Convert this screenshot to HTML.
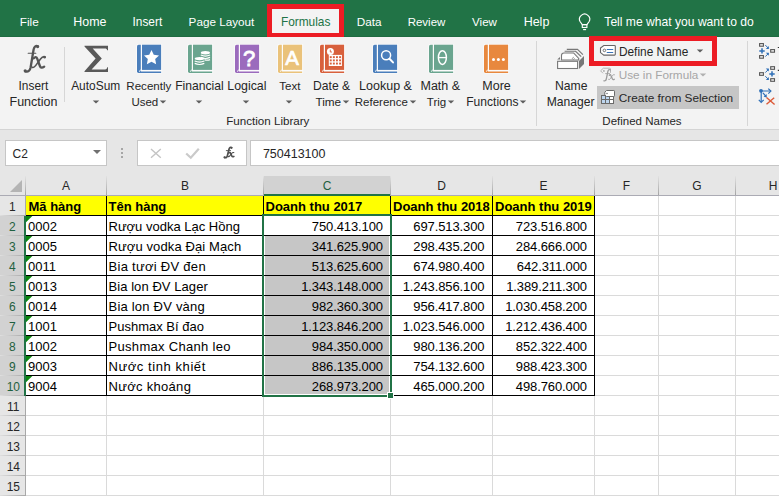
<!DOCTYPE html>
<html><head><meta charset="utf-8"><style>
html,body{margin:0;padding:0;width:779px;height:496px;overflow:hidden;background:#e6e6e6;}
.r{position:absolute;box-sizing:content-box;}
.t{position:absolute;white-space:pre;font-family:"Liberation Sans", sans-serif;}
</style></head><body>
<div class="r" style="left:0px;top:0px;width:779px;height:37px;background:#217346;"></div>
<div class="r" style="left:0px;top:36px;width:779px;height:1px;background:#1e6b41;"></div>
<div class="t" style="left:-170.75px;width:400px;text-align:center;top:17px;font-size:11.8px;line-height:11.8px;color:#ffffff;font-weight:400;">File</div>
<div class="t" style="left:-110.15px;width:400px;text-align:center;top:16px;font-size:12.43px;line-height:12.43px;color:#ffffff;font-weight:400;">Home</div>
<div class="t" style="left:-52.64999999999998px;width:400px;text-align:center;top:17px;font-size:11.88px;line-height:11.88px;color:#ffffff;font-weight:400;">Insert</div>
<div class="t" style="left:21.44999999999999px;width:400px;text-align:center;top:16px;font-size:11.69px;line-height:11.69px;color:#ffffff;font-weight:400;">Page Layout</div>
<div class="t" style="left:169.25px;width:400px;text-align:center;top:16px;font-size:11.75px;line-height:11.75px;color:#ffffff;font-weight:400;">Data</div>
<div class="t" style="left:226.5px;width:400px;text-align:center;top:17px;font-size:11.5px;line-height:11.5px;color:#ffffff;font-weight:400;">Review</div>
<div class="t" style="left:284.5px;width:400px;text-align:center;top:17px;font-size:11.58px;line-height:11.58px;color:#ffffff;font-weight:400;">View</div>
<div class="t" style="left:336.5px;width:400px;text-align:center;top:16px;font-size:12.5px;line-height:12.5px;color:#ffffff;font-weight:400;">Help</div>
<div class="r" style="left:267px;top:4px;width:77px;height:33px;background:#f3f3f3;"></div>
<div class="t" style="left:105.64999999999998px;width:400px;text-align:center;top:17px;font-size:11.88px;line-height:11.88px;color:#217346;font-weight:400;">Formulas</div>
<div class="r" style="left:267px;top:4px;width:67px;height:24px;border:5px solid #ec1c24;"></div>
<svg class="r" style="left:572px;top:8px" width="28" height="26" viewBox="572 8 28 26">
<g fill="none" stroke="#fff" stroke-width="1.15">
<path d="M582.3 24.6 L580.2 21.8 A5.1 5.1 0 1 1 589 21.8 L586.9 24.6 Z"/>
<rect x="582.3" y="24.6" width="4.6" height="2.9"/>
<path d="M583.1 29.6 H586.1"/>
</g>
</svg>
<div class="t" style="left:479.04999999999995px;width:400px;text-align:center;top:16px;font-size:12.12px;line-height:12.12px;color:#ffffff;font-weight:400;">Tell me what you want to do</div>
<div class="r" style="left:0px;top:37px;width:779px;height:92px;background:#f3f3f3;"></div>
<div class="r" style="left:0px;top:129px;width:779px;height:1px;background:#d4d4d4;"></div>
<div class="r" style="left:0px;top:130px;width:779px;height:366px;background:#e6e6e6;"></div>
<div class="r" style="left:64px;top:47px;width:1px;height:55px;background:#d6d6d6;"></div>
<div class="r" style="left:536px;top:41px;width:1px;height:85px;background:#d6d6d6;"></div>
<div class="r" style="left:747px;top:41px;width:1px;height:85px;background:#d6d6d6;"></div>
<svg class="r" style="left:18px;top:40px" width="34" height="36" viewBox="0 0 34 36">
<g fill="none" stroke="#555" stroke-linecap="round">
<path d="M19.8 6.3 C18 5.3 16.3 6.3 15.6 9.5 L12.6 27.5 C12 30.6 10.2 32.3 7.3 31.3" stroke-width="2.3"/>
<path d="M10.2 13.3 H17.8" stroke-width="1.1"/>
<path d="M15.8 18.3 C17.2 16.6 18.6 16.8 19.3 18.8 L21.9 26 C22.6 28 24.2 28.2 26.2 26.6" stroke-width="2.3"/>
<path d="M27 16.8 C25.5 16.2 24 17 22.5 19 L17.8 25.4 C16.6 27.1 15.4 28 14.2 27.3" stroke-width="1.6"/>
</g>
<circle cx="19.6" cy="6.6" r="1.6" fill="#555"/><circle cx="7.2" cy="30.8" r="1.6" fill="#555"/><circle cx="26.6" cy="17.2" r="1.3" fill="#555"/>
</svg>
<div class="t" style="left:-166.6px;width:400px;text-align:center;top:81px;font-size:11.88px;line-height:11.88px;color:#262626;font-weight:400;">Insert</div>
<div class="t" style="left:-166.5px;width:400px;text-align:center;top:96px;font-size:12.5px;line-height:12.5px;color:#262626;font-weight:400;">Function</div>
<svg class="r" style="left:80px;top:40px" width="34" height="36" viewBox="0 0 34 36"><path d="M4.5 5.8 H28 V10.3 H27.2 C27 8.9 26.3 8.4 24.8 8.4 H12.7 L21.8 18.5 L11.6 29.4 H25 C26.5 29.4 27 28.8 27.2 27.3 H28 V32 H4.5 V31.2 L15.6 18.6 L4.5 6.6 Z" fill="#595959"/></svg>
<div class="t" style="left:-104.3px;width:400px;text-align:center;top:81px;font-size:11.93px;line-height:11.93px;color:#262626;font-weight:400;">AutoSum</div>
<svg class="r" style="left:92.3px;top:98.5px" width="8" height="6" viewBox="0 0 8 6"><path d="M0.8 1.4 H7.2 L4 4.6 Z" fill="#5e5e5e"/></svg>
<svg class="r" style="left:136px;top:44px" width="27" height="30" viewBox="0 0 27 30">
<path d="M0.3 2 Q0.3 0 2.3 0 H26.1 V29.6 H2.3 Q0.3 29.6 0.3 27.6 Z" fill="#fbfbfb"/>
<path d="M1 2.3 Q1 0.7 2.6 0.7 H4.8 V28.9 H2.6 Q1 28.9 1 27.3 Z" fill="#4a7ebb"/>
<rect x="6" y="0.7" width="19.1" height="25.2" fill="#4a7ebb"/>
<path d="M3.2 27.4 H25.1 V28.9 H2.6 Z" fill="#4a7ebb"/>
<path d="M4.8 25.9 L3 27.6" stroke="#fff" stroke-width="1"/>
<path d="M15.50 6.00 L17.78 10.77 L23.01 11.46 L19.18 15.10 L20.14 20.29 L15.50 17.77 L10.86 20.29 L11.82 15.10 L7.99 11.46 L13.22 10.77 Z" fill="#fff"/>
</svg>
<div class="t" style="left:-51.19999999999999px;width:400px;text-align:center;top:81px;font-size:11.56px;line-height:11.56px;color:#262626;font-weight:400;">Recently</div>
<div class="t" style="left:-55.19999999999999px;width:400px;text-align:center;top:97px;font-size:11.5px;line-height:11.5px;color:#262626;font-weight:400;">Used</div>
<svg class="r" style="left:159.29999999999998px;top:98.5px" width="8" height="6" viewBox="0 0 8 6"><path d="M0.8 1.4 H7.2 L4 4.6 Z" fill="#5e5e5e"/></svg>
<svg class="r" style="left:187px;top:44px" width="27" height="30" viewBox="0 0 27 30">
<path d="M0.3 2 Q0.3 0 2.3 0 H26.1 V29.6 H2.3 Q0.3 29.6 0.3 27.6 Z" fill="#fbfbfb"/>
<path d="M1 2.3 Q1 0.7 2.6 0.7 H4.8 V28.9 H2.6 Q1 28.9 1 27.3 Z" fill="#6aa58f"/>
<rect x="6" y="0.7" width="19.1" height="25.2" fill="#6aa58f"/>
<path d="M3.2 27.4 H25.1 V28.9 H2.6 Z" fill="#6aa58f"/>
<path d="M4.8 25.9 L3 27.6" stroke="#fff" stroke-width="1"/>
<g fill="none" stroke="#fff" stroke-width="1.2">
<path d="M13.8 11 Q18.4 13.2 23 11 M13.8 13.4 Q18.4 15.6 23 13.4 M17.5 15.6 Q20.2 16.8 23 15.6"/>
<path d="M7.7 17 Q12.5 19.2 17.3 17 M7.7 19.4 Q12.5 21.6 17.3 19.4"/>
</g>
<ellipse cx="18.4" cy="8.7" rx="4.6" ry="1.7" fill="#fff"/>
<ellipse cx="12.5" cy="14.6" rx="4.8" ry="1.7" fill="#fff"/>
</svg>
<div class="t" style="left:-0.5999999999999943px;width:400px;text-align:center;top:80px;font-size:12.13px;line-height:12.13px;color:#262626;font-weight:400;">Financial</div>
<svg class="r" style="left:194.79999999999998px;top:98.5px" width="8" height="6" viewBox="0 0 8 6"><path d="M0.8 1.4 H7.2 L4 4.6 Z" fill="#5e5e5e"/></svg>
<svg class="r" style="left:234px;top:44px" width="27" height="30" viewBox="0 0 27 30">
<path d="M0.3 2 Q0.3 0 2.3 0 H26.1 V29.6 H2.3 Q0.3 29.6 0.3 27.6 Z" fill="#fbfbfb"/>
<path d="M1 2.3 Q1 0.7 2.6 0.7 H4.8 V28.9 H2.6 Q1 28.9 1 27.3 Z" fill="#9b6bbd"/>
<rect x="6" y="0.7" width="19.1" height="25.2" fill="#9b6bbd"/>
<path d="M3.2 27.4 H25.1 V28.9 H2.6 Z" fill="#9b6bbd"/>
<path d="M4.8 25.9 L3 27.6" stroke="#fff" stroke-width="1"/>
<text x="15" y="21.7" text-anchor="middle" font-family="Liberation Sans" font-size="22" fill="#fff" stroke="#fff" stroke-width="0.8">?</text>
</svg>
<div class="t" style="left:46.900000000000006px;width:400px;text-align:center;top:80px;font-size:12.37px;line-height:12.37px;color:#262626;font-weight:400;">Logical</div>
<svg class="r" style="left:242.4px;top:98.5px" width="8" height="6" viewBox="0 0 8 6"><path d="M0.8 1.4 H7.2 L4 4.6 Z" fill="#5e5e5e"/></svg>
<svg class="r" style="left:277px;top:44px" width="27" height="30" viewBox="0 0 27 30">
<path d="M0.3 2 Q0.3 0 2.3 0 H26.1 V29.6 H2.3 Q0.3 29.6 0.3 27.6 Z" fill="#fbfbfb"/>
<path d="M1 2.3 Q1 0.7 2.6 0.7 H4.8 V28.9 H2.6 Q1 28.9 1 27.3 Z" fill="#eac27a"/>
<rect x="6" y="0.7" width="19.1" height="25.2" fill="#eac27a"/>
<path d="M3.2 27.4 H25.1 V28.9 H2.6 Z" fill="#eac27a"/>
<path d="M4.8 25.9 L3 27.6" stroke="#fff" stroke-width="1"/>
<text x="15" y="20.9" text-anchor="middle" font-family="Liberation Sans" font-size="20.5" fill="#fff" stroke="#fff" stroke-width="0.7">A</text>
</svg>
<div class="t" style="left:89.80000000000001px;width:400px;text-align:center;top:81px;font-size:11.5px;line-height:11.5px;color:#262626;font-weight:400;">Text</div>
<svg class="r" style="left:284.6px;top:98.5px" width="8" height="6" viewBox="0 0 8 6"><path d="M0.8 1.4 H7.2 L4 4.6 Z" fill="#5e5e5e"/></svg>
<svg class="r" style="left:319px;top:44px" width="27" height="30" viewBox="0 0 27 30">
<path d="M0.3 2 Q0.3 0 2.3 0 H26.1 V29.6 H2.3 Q0.3 29.6 0.3 27.6 Z" fill="#fbfbfb"/>
<path d="M1 2.3 Q1 0.7 2.6 0.7 H4.8 V28.9 H2.6 Q1 28.9 1 27.3 Z" fill="#d8603c"/>
<rect x="6" y="0.7" width="19.1" height="25.2" fill="#d8603c"/>
<path d="M3.2 27.4 H25.1 V28.9 H2.6 Z" fill="#d8603c"/>
<path d="M4.8 25.9 L3 27.6" stroke="#fff" stroke-width="1"/>
<circle cx="11.4" cy="7.5" r="3.5" fill="#fff"/><path d="M11.3 5.6 V8 H13" stroke="#d8603c" stroke-width="0.9" fill="none"/>
<rect x="9.8" y="10.9" width="13.1" height="11.1" fill="#fff"/>
<g fill="#d8603c"><rect x="10.8" y="12.2" width="1.9" height="1.9"/><rect x="13.9" y="12.2" width="1.9" height="1.9"/><rect x="17.0" y="12.2" width="1.9" height="1.9"/><rect x="20.1" y="12.2" width="1.9" height="1.9"/><rect x="10.8" y="15.4" width="1.9" height="1.9"/><rect x="13.9" y="15.4" width="1.9" height="1.9"/><rect x="17.0" y="15.4" width="1.9" height="1.9"/><rect x="20.1" y="15.4" width="1.9" height="1.9"/><rect x="10.8" y="18.6" width="1.9" height="1.9"/><rect x="13.9" y="18.6" width="1.9" height="1.9"/><rect x="17.0" y="18.6" width="1.9" height="1.9"/><rect x="20.1" y="18.6" width="1.9" height="1.9"/></g>
</svg>
<div class="t" style="left:131.60000000000002px;width:400px;text-align:center;top:80px;font-size:12.13px;line-height:12.13px;color:#262626;font-weight:400;">Date &amp;</div>
<div class="t" style="left:128.3px;width:400px;text-align:center;top:96px;font-size:11.77px;line-height:11.77px;color:#262626;font-weight:400;">Time</div>
<svg class="r" style="left:341.70000000000005px;top:98.5px" width="8" height="6" viewBox="0 0 8 6"><path d="M0.8 1.4 H7.2 L4 4.6 Z" fill="#5e5e5e"/></svg>
<svg class="r" style="left:372px;top:44px" width="27" height="30" viewBox="0 0 27 30">
<path d="M0.3 2 Q0.3 0 2.3 0 H26.1 V29.6 H2.3 Q0.3 29.6 0.3 27.6 Z" fill="#fbfbfb"/>
<path d="M1 2.3 Q1 0.7 2.6 0.7 H4.8 V28.9 H2.6 Q1 28.9 1 27.3 Z" fill="#4a7ebb"/>
<rect x="6" y="0.7" width="19.1" height="25.2" fill="#4a7ebb"/>
<path d="M3.2 27.4 H25.1 V28.9 H2.6 Z" fill="#4a7ebb"/>
<path d="M4.8 25.9 L3 27.6" stroke="#fff" stroke-width="1"/>
<circle cx="14.1" cy="11.3" r="4.5" fill="none" stroke="#fff" stroke-width="1.5"/><path d="M17.5 14.7 L21 18.4" stroke="#fff" stroke-width="2" stroke-linecap="round"/>
</svg>
<div class="t" style="left:185.5px;width:400px;text-align:center;top:80px;font-size:12.5px;line-height:12.5px;color:#262626;font-weight:400;">Lookup &amp;</div>
<div class="t" style="left:181.3px;width:400px;text-align:center;top:97px;font-size:11.5px;line-height:11.5px;color:#262626;font-weight:400;">Reference</div>
<svg class="r" style="left:408.5px;top:98.5px" width="8" height="6" viewBox="0 0 8 6"><path d="M0.8 1.4 H7.2 L4 4.6 Z" fill="#5e5e5e"/></svg>
<svg class="r" style="left:428px;top:44px" width="27" height="30" viewBox="0 0 27 30">
<path d="M0.3 2 Q0.3 0 2.3 0 H26.1 V29.6 H2.3 Q0.3 29.6 0.3 27.6 Z" fill="#fbfbfb"/>
<path d="M1 2.3 Q1 0.7 2.6 0.7 H4.8 V28.9 H2.6 Q1 28.9 1 27.3 Z" fill="#6aa58f"/>
<rect x="6" y="0.7" width="19.1" height="25.2" fill="#6aa58f"/>
<path d="M3.2 27.4 H25.1 V28.9 H2.6 Z" fill="#6aa58f"/>
<path d="M4.8 25.9 L3 27.6" stroke="#fff" stroke-width="1"/>
<ellipse cx="14.4" cy="13.6" rx="4" ry="6.9" fill="none" stroke="#fff" stroke-width="1.5"/><path d="M10.4 13.6 H18.4" stroke="#fff" stroke-width="1.3"/>
</svg>
<div class="t" style="left:240.3px;width:400px;text-align:center;top:80px;font-size:12.5px;line-height:12.5px;color:#262626;font-weight:400;">Math &amp;</div>
<div class="t" style="left:236.5px;width:400px;text-align:center;top:97px;font-size:11.5px;line-height:11.5px;color:#262626;font-weight:400;">Trig</div>
<svg class="r" style="left:447.1px;top:98.5px" width="8" height="6" viewBox="0 0 8 6"><path d="M0.8 1.4 H7.2 L4 4.6 Z" fill="#5e5e5e"/></svg>
<svg class="r" style="left:483px;top:44px" width="27" height="30" viewBox="0 0 27 30">
<path d="M0.3 2 Q0.3 0 2.3 0 H26.1 V29.6 H2.3 Q0.3 29.6 0.3 27.6 Z" fill="#fbfbfb"/>
<path d="M1 2.3 Q1 0.7 2.6 0.7 H4.8 V28.9 H2.6 Q1 28.9 1 27.3 Z" fill="#e8883e"/>
<rect x="6" y="0.7" width="19.1" height="25.2" fill="#e8883e"/>
<path d="M3.2 27.4 H25.1 V28.9 H2.6 Z" fill="#e8883e"/>
<path d="M4.8 25.9 L3 27.6" stroke="#fff" stroke-width="1"/>
<circle cx="10.5" cy="15.5" r="1.5" fill="#fff"/><circle cx="15.4" cy="15.5" r="1.5" fill="#fff"/><circle cx="20.4" cy="15.5" r="1.5" fill="#fff"/>
</svg>
<div class="t" style="left:296.6px;width:400px;text-align:center;top:80px;font-size:12.5px;line-height:12.5px;color:#262626;font-weight:400;">More</div>
<div class="t" style="left:292.4px;width:400px;text-align:center;top:96px;font-size:12.05px;line-height:12.05px;color:#262626;font-weight:400;">Functions</div>
<svg class="r" style="left:518.9px;top:98.5px" width="8" height="6" viewBox="0 0 8 6"><path d="M0.8 1.4 H7.2 L4 4.6 Z" fill="#5e5e5e"/></svg>
<div class="t" style="left:67.80000000000001px;width:400px;text-align:center;top:115px;font-size:11.62px;line-height:11.62px;color:#262626;font-weight:400;">Function Library</div>
<svg class="r" style="left:553px;top:44px" width="36" height="28" viewBox="553 44 36 28">
<g fill="none" stroke="#777" stroke-width="1.1">
<path d="M566.8 49.4 H577.5 L582.9 54.7"/>
<path d="M564.6 51.3 H575.6 L581.2 56.7"/>
<path d="M561.5 60 V55.5 Q561.5 53 564 53 H573.6 L578.7 58.5 V60 Z" fill="#fff"/>
<rect x="557.6" y="61.3" width="20" height="7.2" fill="#fff"/>
<path d="M573.3 57.3 L574.4 58.4 L573.3 59.5 L572.2 58.4 Z" stroke-width="0.7"/>
</g>
<path d="M579 60.9 L584 56 V63.9 L579 68.9 Z" fill="#777"/>
<path d="M557.2 59.6 L560 56.9 V59.6 Z" fill="#777"/>
</svg>
<div class="t" style="left:371.29999999999995px;width:400px;text-align:center;top:80px;font-size:12.19px;line-height:12.19px;color:#262626;font-weight:400;">Name</div>
<div class="t" style="left:370.6px;width:400px;text-align:center;top:96px;font-size:12.13px;line-height:12.13px;color:#262626;font-weight:400;">Manager</div>
<svg class="r" style="left:597px;top:42px" width="20" height="16" viewBox="597 42 20 16">
<path d="M603.8 45.5 H614.5 Q615.3 45.5 615.3 46.3 V54.3 Q615.3 55.1 614.5 55.1 H603.8 L600.5 52.6 V48.1 Z" fill="#fff" stroke="#666" stroke-width="1.1"/>
<circle cx="604.4" cy="50.4" r="1.3" fill="none" stroke="#666" stroke-width="0.9"/>
<path d="M607.2 49.5 H612.8 M607.2 52.5 H612.8" stroke="#3a73b8" stroke-width="1.1" stroke-linecap="round"/>
</svg>
<div class="t" style="left:453.6px;width:400px;text-align:center;top:47px;font-size:11.88px;line-height:11.88px;color:#262626;font-weight:400;">Define Name</div>
<svg class="r" style="left:695.6px;top:48.3px" width="8" height="6" viewBox="0 0 8 6"><path d="M0.8 1.4 H7.2 L4 4.6 Z" fill="#5e5e5e"/></svg>
<div class="r" style="left:589px;top:36px;width:118px;height:20px;border:5px solid #ec1c24;"></div>
<svg class="r" style="left:596px;top:64px" width="24" height="22" viewBox="596 64 24 22">
<path d="M610.5 72.8 V69.2 Q610.5 68.2 609.5 68.2 H603.4 L600.6 70.8 L603 73.3" fill="none" stroke="#b4b4b4" stroke-width="1"/>
<circle cx="603.9" cy="70.9" r="0.9" fill="#a8a8a8"/>
<g fill="none" stroke="#9c9c9c" stroke-linecap="round">
<path d="M610.2 69.8 C609.2 69.2 608.3 69.8 607.9 71.4 L606.3 79 C606 80.4 605.2 81.2 603.9 80.8" stroke-width="1.3"/>
<path d="M605.6 73.6 H609.6" stroke-width="0.8"/>
<path d="M609.3 75.3 C609.9 74.5 610.6 74.6 610.9 75.5 L612.3 78.8 C612.7 79.8 613.5 79.9 614.3 79.3" stroke-width="1.3"/>
<path d="M614.4 74.7 C613.6 74.4 612.9 74.9 612.2 75.8 L610.4 78.6 C609.9 79.4 609.3 79.8 608.6 79.4" stroke-width="0.9"/>
</g>
</svg>
<div class="t" style="left:458.5px;width:400px;text-align:center;top:69px;font-size:11.76px;line-height:11.76px;color:#a6a6a6;font-weight:400;">Use in Formula</div>
<svg class="r" style="left:699.0px;top:71.5px" width="8" height="6" viewBox="0 0 8 6"><path d="M0.8 1.4 H7.2 L4 4.6 Z" fill="#b0b0b0"/></svg>
<div class="r" style="left:597px;top:86px;width:142px;height:23px;background:#c6c6c6;"></div>
<svg class="r" style="left:598px;top:87px" width="20" height="20" viewBox="598 87 20 20">
<rect x="601.5" y="95.5" width="12" height="8" fill="#fff"/>
<rect x="601.5" y="95.5" width="8" height="8" fill="#bdd5ee"/>
<g fill="none" stroke="#6a6a6a" stroke-width="1">
<rect x="601.5" y="95.5" width="12" height="8"/>
<path d="M605.5 95.5 V103.5 M609.5 95.5 V103.5 M601.5 99.5 H613.5"/>
</g>
<path d="M606.5 90.5 H613.8 Q614.5 90.5 614.5 91.2 V95.8 Q614.5 96.5 613.8 96.5 H606.5 L604.8 94.8 V92.2 Z" fill="#fff" stroke="#6a6a6a" stroke-width="1"/>
<path d="M606.3 93.5 H607.7 M607 92.8 V94.2" stroke="#6a6a6a" stroke-width="0.7"/>
</svg>
<div class="t" style="left:476px;width:400px;text-align:center;top:93px;font-size:11.84px;line-height:11.84px;color:#262626;font-weight:400;">Create from Selection</div>
<div class="t" style="left:442px;width:400px;text-align:center;top:116px;font-size:11.5px;line-height:11.5px;color:#262626;font-weight:400;">Defined Names</div>
<svg class="r" style="left:754px;top:40px" width="25" height="68" viewBox="754 40 25 68">
<g fill="none" stroke="#555" stroke-width="1.1">
<rect x="759.6" y="43.6" width="3.8" height="2.6"/><rect x="759.6" y="55.6" width="3.8" height="2.6"/><rect x="770.7" y="49.6" width="3.8" height="2.6"/>
<rect x="759.6" y="72.7" width="3.8" height="2.6"/><rect x="770.7" y="66.7" width="3.8" height="2.6"/><rect x="770.7" y="78.7" width="3.8" height="2.6"/>
</g>
<g stroke="#2e6fb7" fill="none">
<path d="M762 48.2 V53.6 M759.3 50.9 H764.7" stroke-width="1.5"/>
<path d="M765.3 45.1 L768.4 48.2 M765.3 56.6 L768.4 53.5" stroke-width="1"/>
<path d="M772 71.2 V76.6 M769.3 73.9 H774.7" stroke-width="1.5"/>
<path d="M765.3 72.6 L768.4 69.5 M765.3 76.2 L768.4 79.3" stroke-width="1"/>
<path d="M761.2 91 H770 M761.2 91 V101.8 M762.9 92.9 L766 96.4" stroke-width="1.2"/>
<path d="M768.3 88.6 L770.9 91.1 L768.3 93.6 M758.8 99.8 L761.2 102.4 L763.7 99.8" stroke-width="1.2"/>
</g>
<g fill="#2e6fb7">
<path d="M768.8 49 V46 L765.8 49 Z"/><path d="M768.8 52.8 V55.8 L765.8 52.8 Z"/>
<path d="M768.8 68.6 V71.6 L765.8 68.6 Z"/><path d="M768.8 80 V77 L765.8 80 Z"/>
<circle cx="761" cy="90.8" r="1.9"/><path d="M766.8 97.4 L766.6 94 L763.6 96.8 Z"/>
</g>
<path d="M766.5 97.5 L774.6 104.5 M766.5 104.3 L774.2 97.8" stroke="#dc5a38" stroke-width="1.4"/>
<path d="M777.8 47.5 H779 M777.8 70.4 H779" stroke="#333" stroke-width="1.2"/>
</svg>
<div class="r" style="left:5px;top:140px;width:100px;height:24px;background:#fff;border:1px solid #c6c6c6;"></div>
<div class="t" style="left:12.6px;top:148px;font-size:12px;line-height:12px;color:#262626;font-weight:400;">C2</div>
<div class="r" style="left:92.5px;top:150.3px;width:0;height:0;border-left:4px solid transparent;border-right:4px solid transparent;border-top:4px solid #707070;"></div>
<div class="r" style="left:121px;top:148px;width:2px;height:2px;background:#a6a6a6;"></div>
<div class="r" style="left:121px;top:152px;width:2px;height:2px;background:#a6a6a6;"></div>
<div class="r" style="left:121px;top:156px;width:2px;height:2px;background:#a6a6a6;"></div>
<div class="r" style="left:137px;top:140px;width:108px;height:24px;background:#fff;border:1px solid #c6c6c6;"></div>
<svg class="r" style="left:150px;top:148px" width="12" height="11" viewBox="0 0 12 11"><path d="M1 1 L10.8 9.8 M10.8 1 L1 9.8" stroke="#c4c4c4" stroke-width="1.4"/></svg>
<svg class="r" style="left:185px;top:147px" width="15" height="13" viewBox="0 0 15 13"><path d="M1.2 6.5 L5.8 10.8 L13.8 1.8" fill="none" stroke="#cacaca" stroke-width="2.2"/></svg>
<svg class="r" style="left:221px;top:145px" width="15" height="15" viewBox="0 0 15 15">
<g fill="none" stroke="#505050" stroke-linecap="round">
<path d="M10.6 2.6 C9.6 1.9 8.4 2.4 8 4.2 L6.4 10.8 C6 12.4 5 13 3.6 12.5" stroke-width="1.7"/>
<path d="M5.3 5.6 H9.6" stroke-width="0.9"/>
<path d="M7.9 8 C8.6 7.2 9.3 7.3 9.6 8.1 L10.9 11.1 C11.3 12 12.1 12 12.9 11.4" stroke-width="1.6"/>
<path d="M12.8 7.6 C12 7.3 11.3 7.7 10.6 8.5 L8.8 10.9 C8.3 11.6 7.7 11.9 7.1 11.5" stroke-width="1.1"/>
</g>
<circle cx="10.5" cy="2.8" r="1.1" fill="#505050"/><circle cx="3.6" cy="12.3" r="1.1" fill="#505050"/>
</svg>
<div class="r" style="left:250px;top:140px;width:540px;height:24px;background:#fff;border:1px solid #c6c6c6;"></div>
<div class="t" style="left:262.9px;top:148px;font-size:12.5px;line-height:12.5px;color:#262626;font-weight:400;">750413100</div>
<div class="r" style="left:26px;top:196px;width:753px;height:300px;background:#ffffff;"></div>
<div class="r" style="left:0px;top:166px;width:779px;height:29px;background:#e6e6e6;"></div>
<div class="r" style="left:264px;top:176px;width:126px;height:19px;background:#d2d2d2;"></div>
<div class="r" style="left:25px;top:176px;width:1px;height:19px;background:linear-gradient(to bottom,#e2e2e2,#a4a4a4);"></div>
<div class="r" style="left:106px;top:176px;width:1px;height:19px;background:linear-gradient(to bottom,#e2e2e2,#a4a4a4);"></div>
<div class="r" style="left:263px;top:176px;width:1px;height:19px;background:linear-gradient(to bottom,#e2e2e2,#a4a4a4);"></div>
<div class="r" style="left:390px;top:176px;width:1px;height:19px;background:linear-gradient(to bottom,#e2e2e2,#a4a4a4);"></div>
<div class="r" style="left:492px;top:176px;width:1px;height:19px;background:linear-gradient(to bottom,#e2e2e2,#a4a4a4);"></div>
<div class="r" style="left:594px;top:176px;width:1px;height:19px;background:linear-gradient(to bottom,#e2e2e2,#a4a4a4);"></div>
<div class="r" style="left:658px;top:176px;width:1px;height:19px;background:linear-gradient(to bottom,#e2e2e2,#a4a4a4);"></div>
<div class="r" style="left:735px;top:176px;width:1px;height:19px;background:linear-gradient(to bottom,#e2e2e2,#a4a4a4);"></div>
<div class="r" style="left:0px;top:195px;width:779px;height:1px;background:#ababb4;"></div>
<div class="r" style="left:264px;top:194px;width:126px;height:2px;background:#217346;"></div>
<div class="t" style="left:-134.0px;width:400px;text-align:center;top:180px;font-size:12px;line-height:12px;color:#262626;font-weight:400;">A</div>
<div class="t" style="left:-15.0px;width:400px;text-align:center;top:180px;font-size:12px;line-height:12px;color:#262626;font-weight:400;">B</div>
<div class="t" style="left:127.0px;width:400px;text-align:center;top:180px;font-size:12px;line-height:12px;color:#1f6040;font-weight:400;">C</div>
<div class="t" style="left:241.5px;width:400px;text-align:center;top:180px;font-size:12px;line-height:12px;color:#262626;font-weight:400;">D</div>
<div class="t" style="left:343.5px;width:400px;text-align:center;top:180px;font-size:12px;line-height:12px;color:#262626;font-weight:400;">E</div>
<div class="t" style="left:426.5px;width:400px;text-align:center;top:180px;font-size:12px;line-height:12px;color:#262626;font-weight:400;">F</div>
<div class="t" style="left:497.0px;width:400px;text-align:center;top:180px;font-size:12px;line-height:12px;color:#262626;font-weight:400;">G</div>
<div class="t" style="left:573px;width:400px;text-align:center;top:180px;font-size:12px;line-height:12px;color:#262626;font-weight:400;">H</div>
<svg class="r" style="left:10px;top:180px" width="12" height="12" viewBox="0 0 12 12"><path d="M12 0 V12 H0 Z" fill="#b4b4b4"/></svg>
<div class="r" style="left:0px;top:196px;width:25px;height:19px;background:#e6e6e6;"></div>
<div class="r" style="left:0px;top:215px;width:25px;height:1px;background:linear-gradient(to right,#dedede,#a8a8a8);"></div>
<div class="t" style="left:-187.7px;width:400px;text-align:center;top:201px;font-size:12px;line-height:12px;color:#262626;font-weight:400;">1</div>
<div class="r" style="left:0px;top:216px;width:25px;height:19px;background:#d2d2d2;"></div>
<div class="r" style="left:0px;top:235px;width:25px;height:1px;background:linear-gradient(to right,#dedede,#a8a8a8);"></div>
<div class="t" style="left:-187.7px;width:400px;text-align:center;top:221px;font-size:12px;line-height:12px;color:#1f6040;font-weight:400;">2</div>
<div class="r" style="left:0px;top:236px;width:25px;height:19px;background:#d2d2d2;"></div>
<div class="r" style="left:0px;top:255px;width:25px;height:1px;background:linear-gradient(to right,#dedede,#a8a8a8);"></div>
<div class="t" style="left:-187.7px;width:400px;text-align:center;top:241px;font-size:12px;line-height:12px;color:#1f6040;font-weight:400;">3</div>
<div class="r" style="left:0px;top:256px;width:25px;height:19px;background:#d2d2d2;"></div>
<div class="r" style="left:0px;top:275px;width:25px;height:1px;background:linear-gradient(to right,#dedede,#a8a8a8);"></div>
<div class="t" style="left:-187.7px;width:400px;text-align:center;top:261px;font-size:12px;line-height:12px;color:#1f6040;font-weight:400;">4</div>
<div class="r" style="left:0px;top:276px;width:25px;height:19px;background:#d2d2d2;"></div>
<div class="r" style="left:0px;top:295px;width:25px;height:1px;background:linear-gradient(to right,#dedede,#a8a8a8);"></div>
<div class="t" style="left:-187.7px;width:400px;text-align:center;top:281px;font-size:12px;line-height:12px;color:#1f6040;font-weight:400;">5</div>
<div class="r" style="left:0px;top:296px;width:25px;height:19px;background:#d2d2d2;"></div>
<div class="r" style="left:0px;top:315px;width:25px;height:1px;background:linear-gradient(to right,#dedede,#a8a8a8);"></div>
<div class="t" style="left:-187.7px;width:400px;text-align:center;top:301px;font-size:12px;line-height:12px;color:#1f6040;font-weight:400;">6</div>
<div class="r" style="left:0px;top:316px;width:25px;height:19px;background:#d2d2d2;"></div>
<div class="r" style="left:0px;top:335px;width:25px;height:1px;background:linear-gradient(to right,#dedede,#a8a8a8);"></div>
<div class="t" style="left:-187.7px;width:400px;text-align:center;top:321px;font-size:12px;line-height:12px;color:#1f6040;font-weight:400;">7</div>
<div class="r" style="left:0px;top:336px;width:25px;height:19px;background:#d2d2d2;"></div>
<div class="r" style="left:0px;top:355px;width:25px;height:1px;background:linear-gradient(to right,#dedede,#a8a8a8);"></div>
<div class="t" style="left:-187.7px;width:400px;text-align:center;top:341px;font-size:12px;line-height:12px;color:#1f6040;font-weight:400;">8</div>
<div class="r" style="left:0px;top:356px;width:25px;height:19px;background:#d2d2d2;"></div>
<div class="r" style="left:0px;top:375px;width:25px;height:1px;background:linear-gradient(to right,#dedede,#a8a8a8);"></div>
<div class="t" style="left:-187.7px;width:400px;text-align:center;top:361px;font-size:12px;line-height:12px;color:#1f6040;font-weight:400;">9</div>
<div class="r" style="left:0px;top:376px;width:25px;height:19px;background:#d2d2d2;"></div>
<div class="r" style="left:0px;top:395px;width:25px;height:1px;background:linear-gradient(to right,#dedede,#a8a8a8);"></div>
<div class="t" style="left:-186.7px;width:400px;text-align:center;top:381px;font-size:12px;line-height:12px;color:#1f6040;font-weight:400;">10</div>
<div class="r" style="left:0px;top:396px;width:25px;height:19px;background:#e6e6e6;"></div>
<div class="r" style="left:0px;top:415px;width:25px;height:1px;background:linear-gradient(to right,#dedede,#a8a8a8);"></div>
<div class="t" style="left:-186.7px;width:400px;text-align:center;top:401px;font-size:12px;line-height:12px;color:#262626;font-weight:400;">11</div>
<div class="r" style="left:0px;top:416px;width:25px;height:19px;background:#e6e6e6;"></div>
<div class="r" style="left:0px;top:435px;width:25px;height:1px;background:linear-gradient(to right,#dedede,#a8a8a8);"></div>
<div class="t" style="left:-186.7px;width:400px;text-align:center;top:421px;font-size:12px;line-height:12px;color:#262626;font-weight:400;">12</div>
<div class="r" style="left:0px;top:436px;width:25px;height:19px;background:#e6e6e6;"></div>
<div class="r" style="left:0px;top:455px;width:25px;height:1px;background:linear-gradient(to right,#dedede,#a8a8a8);"></div>
<div class="t" style="left:-186.7px;width:400px;text-align:center;top:441px;font-size:12px;line-height:12px;color:#262626;font-weight:400;">13</div>
<div class="r" style="left:0px;top:456px;width:25px;height:19px;background:#e6e6e6;"></div>
<div class="r" style="left:0px;top:475px;width:25px;height:1px;background:linear-gradient(to right,#dedede,#a8a8a8);"></div>
<div class="t" style="left:-186.7px;width:400px;text-align:center;top:461px;font-size:12px;line-height:12px;color:#262626;font-weight:400;">14</div>
<div class="r" style="left:0px;top:476px;width:25px;height:19px;background:#e6e6e6;"></div>
<div class="r" style="left:0px;top:495px;width:25px;height:1px;background:linear-gradient(to right,#dedede,#a8a8a8);"></div>
<div class="t" style="left:-186.7px;width:400px;text-align:center;top:481px;font-size:12px;line-height:12px;color:#262626;font-weight:400;">15</div>
<div class="r" style="left:25px;top:196px;width:1px;height:300px;background:#a8a8a8;"></div>
<div class="r" style="left:24px;top:216px;width:2px;height:180px;background:#217346;"></div>
<div class="r" style="left:106px;top:196px;width:1px;height:300px;background:#dadada;"></div>
<div class="r" style="left:263px;top:196px;width:1px;height:300px;background:#dadada;"></div>
<div class="r" style="left:390px;top:196px;width:1px;height:300px;background:#dadada;"></div>
<div class="r" style="left:492px;top:196px;width:1px;height:300px;background:#dadada;"></div>
<div class="r" style="left:594px;top:196px;width:1px;height:300px;background:#dadada;"></div>
<div class="r" style="left:658px;top:196px;width:1px;height:300px;background:#dadada;"></div>
<div class="r" style="left:735px;top:196px;width:1px;height:300px;background:#dadada;"></div>
<div class="r" style="left:26px;top:215px;width:753px;height:1px;background:#dadada;"></div>
<div class="r" style="left:26px;top:235px;width:753px;height:1px;background:#dadada;"></div>
<div class="r" style="left:26px;top:255px;width:753px;height:1px;background:#dadada;"></div>
<div class="r" style="left:26px;top:275px;width:753px;height:1px;background:#dadada;"></div>
<div class="r" style="left:26px;top:295px;width:753px;height:1px;background:#dadada;"></div>
<div class="r" style="left:26px;top:315px;width:753px;height:1px;background:#dadada;"></div>
<div class="r" style="left:26px;top:335px;width:753px;height:1px;background:#dadada;"></div>
<div class="r" style="left:26px;top:355px;width:753px;height:1px;background:#dadada;"></div>
<div class="r" style="left:26px;top:375px;width:753px;height:1px;background:#dadada;"></div>
<div class="r" style="left:26px;top:395px;width:753px;height:1px;background:#dadada;"></div>
<div class="r" style="left:26px;top:415px;width:753px;height:1px;background:#dadada;"></div>
<div class="r" style="left:26px;top:435px;width:753px;height:1px;background:#dadada;"></div>
<div class="r" style="left:26px;top:455px;width:753px;height:1px;background:#dadada;"></div>
<div class="r" style="left:26px;top:475px;width:753px;height:1px;background:#dadada;"></div>
<div class="r" style="left:26px;top:495px;width:753px;height:1px;background:#dadada;"></div>
<div class="r" style="left:26px;top:196px;width:568px;height:19px;background:#ffff00;"></div>
<div class="r" style="left:265px;top:236px;width:124px;height:158px;background:#c6c6c6;"></div>
<div class="r" style="left:26px;top:215px;width:569px;height:1px;background:#000;"></div>
<div class="r" style="left:26px;top:235px;width:569px;height:1px;background:#000;"></div>
<div class="r" style="left:26px;top:255px;width:569px;height:1px;background:#000;"></div>
<div class="r" style="left:26px;top:275px;width:569px;height:1px;background:#000;"></div>
<div class="r" style="left:26px;top:295px;width:569px;height:1px;background:#000;"></div>
<div class="r" style="left:26px;top:315px;width:569px;height:1px;background:#000;"></div>
<div class="r" style="left:26px;top:335px;width:569px;height:1px;background:#000;"></div>
<div class="r" style="left:26px;top:355px;width:569px;height:1px;background:#000;"></div>
<div class="r" style="left:26px;top:375px;width:569px;height:1px;background:#000;"></div>
<div class="r" style="left:26px;top:395px;width:569px;height:1px;background:#000;"></div>
<div class="r" style="left:106px;top:196px;width:1px;height:200px;background:#000;"></div>
<div class="r" style="left:263px;top:196px;width:1px;height:200px;background:#000;"></div>
<div class="r" style="left:390px;top:196px;width:1px;height:200px;background:#000;"></div>
<div class="r" style="left:492px;top:196px;width:1px;height:200px;background:#000;"></div>
<div class="r" style="left:594px;top:196px;width:1px;height:200px;background:#000;"></div>
<div class="t" style="left:28.5px;top:200px;font-size:13px;line-height:13px;color:#000;font-weight:700;">Mã hàng</div>
<div class="t" style="left:108.5px;top:200px;font-size:13px;line-height:13px;color:#000;font-weight:700;">Tên hàng</div>
<div class="t" style="left:265.5px;top:200px;font-size:13px;line-height:13px;color:#000;font-weight:700;">Doanh thu 2017</div>
<div class="t" style="left:393px;top:200px;font-size:13px;line-height:13px;color:#000;font-weight:700;">Doanh thu 2018</div>
<div class="t" style="left:495px;top:200px;font-size:13px;line-height:13px;color:#000;font-weight:700;">Doanh thu 2019</div>
<div class="t" style="left:28px;top:220px;font-size:13px;line-height:13px;color:#000;font-weight:400;">0002</div>
<div class="t" style="left:108.5px;top:220px;font-size:13px;line-height:13px;color:#000;font-weight:400;letter-spacing:0.0px">Rượu vodka Lạc Hồng</div>
<div class="t" style="left:-17px;width:400px;text-align:right;top:220px;font-size:13px;line-height:13px;color:#000;font-weight:400;letter-spacing:-0.1px">750.413.100</div>
<div class="t" style="left:84.5px;width:400px;text-align:right;top:220px;font-size:13px;line-height:13px;color:#000;font-weight:400;letter-spacing:-0.1px">697.513.300</div>
<div class="t" style="left:187px;width:400px;text-align:right;top:220px;font-size:13px;line-height:13px;color:#000;font-weight:400;letter-spacing:-0.1px">723.516.800</div>
<svg class="r" style="left:26px;top:216px" width="7" height="7" viewBox="0 0 7 7"><path d="M0 0 H6.3 L0 6.3 Z" fill="#0b870f"/></svg>
<div class="t" style="left:28px;top:240px;font-size:13px;line-height:13px;color:#000;font-weight:400;">0005</div>
<div class="t" style="left:108.5px;top:240px;font-size:13px;line-height:13px;color:#000;font-weight:400;letter-spacing:0.111px">Rượu vodka Đại Mạch</div>
<div class="t" style="left:-17px;width:400px;text-align:right;top:240px;font-size:13px;line-height:13px;color:#000;font-weight:400;letter-spacing:-0.1px">341.625.900</div>
<div class="t" style="left:84.5px;width:400px;text-align:right;top:240px;font-size:13px;line-height:13px;color:#000;font-weight:400;letter-spacing:-0.1px">298.435.200</div>
<div class="t" style="left:187px;width:400px;text-align:right;top:240px;font-size:13px;line-height:13px;color:#000;font-weight:400;letter-spacing:-0.1px">284.666.000</div>
<svg class="r" style="left:26px;top:236px" width="7" height="7" viewBox="0 0 7 7"><path d="M0 0 H6.3 L0 6.3 Z" fill="#0b870f"/></svg>
<div class="t" style="left:28px;top:260px;font-size:13px;line-height:13px;color:#000;font-weight:400;">0011</div>
<div class="t" style="left:108.5px;top:260px;font-size:13px;line-height:13px;color:#000;font-weight:400;letter-spacing:0.286px">Bia tươi ĐV đen</div>
<div class="t" style="left:-17px;width:400px;text-align:right;top:260px;font-size:13px;line-height:13px;color:#000;font-weight:400;letter-spacing:-0.1px">513.625.600</div>
<div class="t" style="left:84.5px;width:400px;text-align:right;top:260px;font-size:13px;line-height:13px;color:#000;font-weight:400;letter-spacing:-0.1px">674.980.400</div>
<div class="t" style="left:187px;width:400px;text-align:right;top:260px;font-size:13px;line-height:13px;color:#000;font-weight:400;letter-spacing:-0.1px">642.311.000</div>
<svg class="r" style="left:26px;top:256px" width="7" height="7" viewBox="0 0 7 7"><path d="M0 0 H6.3 L0 6.3 Z" fill="#0b870f"/></svg>
<div class="t" style="left:28px;top:280px;font-size:13px;line-height:13px;color:#000;font-weight:400;">0013</div>
<div class="t" style="left:108.5px;top:280px;font-size:13px;line-height:13px;color:#000;font-weight:400;letter-spacing:0.067px">Bia lon ĐV Lager</div>
<div class="t" style="left:-17px;width:400px;text-align:right;top:280px;font-size:13px;line-height:13px;color:#000;font-weight:400;letter-spacing:-0.1px">1.343.148.000</div>
<div class="t" style="left:84.5px;width:400px;text-align:right;top:280px;font-size:13px;line-height:13px;color:#000;font-weight:400;letter-spacing:-0.1px">1.243.856.100</div>
<div class="t" style="left:187px;width:400px;text-align:right;top:280px;font-size:13px;line-height:13px;color:#000;font-weight:400;letter-spacing:-0.1px">1.389.211.300</div>
<svg class="r" style="left:26px;top:276px" width="7" height="7" viewBox="0 0 7 7"><path d="M0 0 H6.3 L0 6.3 Z" fill="#0b870f"/></svg>
<div class="t" style="left:28px;top:300px;font-size:13px;line-height:13px;color:#000;font-weight:400;">0014</div>
<div class="t" style="left:108.5px;top:300px;font-size:13px;line-height:13px;color:#000;font-weight:400;letter-spacing:0.214px">Bia lon ĐV vàng</div>
<div class="t" style="left:-17px;width:400px;text-align:right;top:300px;font-size:13px;line-height:13px;color:#000;font-weight:400;letter-spacing:-0.1px">982.360.300</div>
<div class="t" style="left:84.5px;width:400px;text-align:right;top:300px;font-size:13px;line-height:13px;color:#000;font-weight:400;letter-spacing:-0.1px">956.417.800</div>
<div class="t" style="left:187px;width:400px;text-align:right;top:300px;font-size:13px;line-height:13px;color:#000;font-weight:400;letter-spacing:-0.1px">1.030.458.200</div>
<svg class="r" style="left:26px;top:296px" width="7" height="7" viewBox="0 0 7 7"><path d="M0 0 H6.3 L0 6.3 Z" fill="#0b870f"/></svg>
<div class="t" style="left:28px;top:320px;font-size:13px;line-height:13px;color:#000;font-weight:400;">1001</div>
<div class="t" style="left:108.5px;top:320px;font-size:13px;line-height:13px;color:#000;font-weight:400;letter-spacing:0.0px">Pushmax Bí đao</div>
<div class="t" style="left:-17px;width:400px;text-align:right;top:320px;font-size:13px;line-height:13px;color:#000;font-weight:400;letter-spacing:-0.1px">1.123.846.200</div>
<div class="t" style="left:84.5px;width:400px;text-align:right;top:320px;font-size:13px;line-height:13px;color:#000;font-weight:400;letter-spacing:-0.1px">1.023.546.000</div>
<div class="t" style="left:187px;width:400px;text-align:right;top:320px;font-size:13px;line-height:13px;color:#000;font-weight:400;letter-spacing:-0.1px">1.212.436.400</div>
<svg class="r" style="left:26px;top:316px" width="7" height="7" viewBox="0 0 7 7"><path d="M0 0 H6.3 L0 6.3 Z" fill="#0b870f"/></svg>
<div class="t" style="left:28px;top:340px;font-size:13px;line-height:13px;color:#000;font-weight:400;">1002</div>
<div class="t" style="left:108.5px;top:340px;font-size:13px;line-height:13px;color:#000;font-weight:400;letter-spacing:0.312px">Pushmax Chanh leo</div>
<div class="t" style="left:-17px;width:400px;text-align:right;top:340px;font-size:13px;line-height:13px;color:#000;font-weight:400;letter-spacing:-0.1px">984.350.000</div>
<div class="t" style="left:84.5px;width:400px;text-align:right;top:340px;font-size:13px;line-height:13px;color:#000;font-weight:400;letter-spacing:-0.1px">980.136.200</div>
<div class="t" style="left:187px;width:400px;text-align:right;top:340px;font-size:13px;line-height:13px;color:#000;font-weight:400;letter-spacing:-0.1px">852.322.400</div>
<svg class="r" style="left:26px;top:336px" width="7" height="7" viewBox="0 0 7 7"><path d="M0 0 H6.3 L0 6.3 Z" fill="#0b870f"/></svg>
<div class="t" style="left:28px;top:360px;font-size:13px;line-height:13px;color:#000;font-weight:400;">9003</div>
<div class="t" style="left:108.5px;top:360px;font-size:13px;line-height:13px;color:#000;font-weight:400;letter-spacing:0.571px">Nước tinh khiết</div>
<div class="t" style="left:-17px;width:400px;text-align:right;top:360px;font-size:13px;line-height:13px;color:#000;font-weight:400;letter-spacing:-0.1px">886.135.000</div>
<div class="t" style="left:84.5px;width:400px;text-align:right;top:360px;font-size:13px;line-height:13px;color:#000;font-weight:400;letter-spacing:-0.1px">754.132.600</div>
<div class="t" style="left:187px;width:400px;text-align:right;top:360px;font-size:13px;line-height:13px;color:#000;font-weight:400;letter-spacing:-0.1px">988.423.300</div>
<svg class="r" style="left:26px;top:356px" width="7" height="7" viewBox="0 0 7 7"><path d="M0 0 H6.3 L0 6.3 Z" fill="#0b870f"/></svg>
<div class="t" style="left:28px;top:380px;font-size:13px;line-height:13px;color:#000;font-weight:400;">9004</div>
<div class="t" style="left:108.5px;top:380px;font-size:13px;line-height:13px;color:#000;font-weight:400;letter-spacing:0.3px">Nước khoáng</div>
<div class="t" style="left:-17px;width:400px;text-align:right;top:380px;font-size:13px;line-height:13px;color:#000;font-weight:400;letter-spacing:-0.1px">268.973.200</div>
<div class="t" style="left:84.5px;width:400px;text-align:right;top:380px;font-size:13px;line-height:13px;color:#000;font-weight:400;letter-spacing:-0.1px">465.000.200</div>
<div class="t" style="left:187px;width:400px;text-align:right;top:380px;font-size:13px;line-height:13px;color:#000;font-weight:400;letter-spacing:-0.1px">498.760.000</div>
<svg class="r" style="left:26px;top:376px" width="7" height="7" viewBox="0 0 7 7"><path d="M0 0 H6.3 L0 6.3 Z" fill="#0b870f"/></svg>
<div class="r" style="left:264px;top:216px;width:126px;height:19px;background:#ffffff;"></div>
<div class="t" style="left:-17px;width:400px;text-align:right;top:220px;font-size:13px;line-height:13px;color:#000;font-weight:400;letter-spacing:-0.1px">750.413.100</div>
<div class="r" style="left:262px;top:215px;width:2px;height:182px;background:#217346;"></div>
<div class="r" style="left:390px;top:215px;width:2px;height:178px;background:#217346;"></div>
<div class="r" style="left:262px;top:395px;width:126px;height:2px;background:#217346;"></div>
<div class="r" style="left:262px;top:214px;width:130px;height:2px;background:#217346;"></div>
<div class="r" style="left:387px;top:392px;width:7px;height:7px;background:#ffffff;"></div>
<div class="r" style="left:388px;top:393px;width:5px;height:5px;background:#217346;"></div>
</body></html>
